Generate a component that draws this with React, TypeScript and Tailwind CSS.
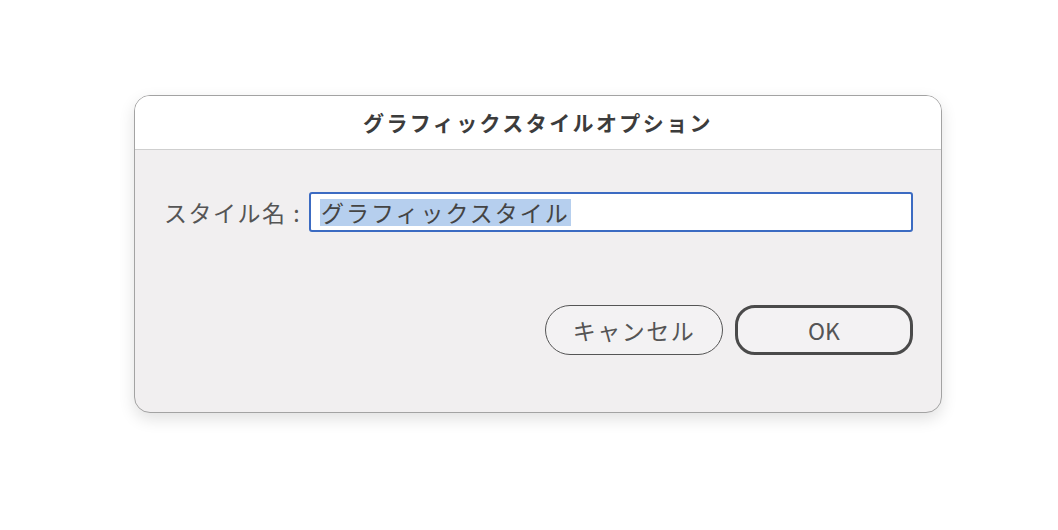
export default function App() {
  return (
    <main
      className="min-h-[530px] w-full bg-white pt-[95px] pl-[134px]"
      style={{ fontFamily: '"Noto Sans CJK JP", "Noto Sans", sans-serif' }}
    >
      <div className="w-[808px] h-[318px] rounded-[16px] border border-[#a3a3a3] bg-[#f1eff0] overflow-hidden shadow-[0_6px_16px_rgba(0,0,0,0.12)] flex flex-col">
        <div className="h-[54px] shrink-0 bg-white border-b border-[#cfcfcf] flex items-center justify-center">
          <h1 className="text-[21px] font-bold text-[#3c3c3c] tracking-[2.4px] leading-none">
            グラフィックスタイルオプション
          </h1>
        </div>
        <div className="flex-1 flex flex-col pl-[29px] pr-[28px] pt-[42px]">
          <div className="flex items-center">
            <label className="text-[23px] text-[#555] tracking-[1.5px] w-[145px] shrink-0 leading-none">
              スタイル名&nbsp;:
            </label>
            <div className="flex-1 h-[40px] bg-white border-2 border-[#3c6bc2] rounded-[3px] flex items-center pl-[9px]">
              <span className="bg-[#b6cfee] text-[23px] text-[#444] tracking-[2px] leading-[27px] px-[1px]">
                グラフィックスタイル
              </span>
            </div>
          </div>
          <div className="flex justify-end gap-[12px] mt-[73px]">
            <button className="w-[178px] h-[50px] rounded-full border-[1.5px] border-[#555] bg-[#f3f2f3] text-[23px] text-[#555] tracking-[1.5px] leading-none">
              キャンセル
            </button>
            <button className="w-[178px] h-[50px] rounded-[20px] border-[3px] border-[#4a4a4a] bg-[#f3f2f3] text-[23px] text-[#555] leading-none">
              OK
            </button>
          </div>
        </div>
      </div>
    </main>
  )
}
